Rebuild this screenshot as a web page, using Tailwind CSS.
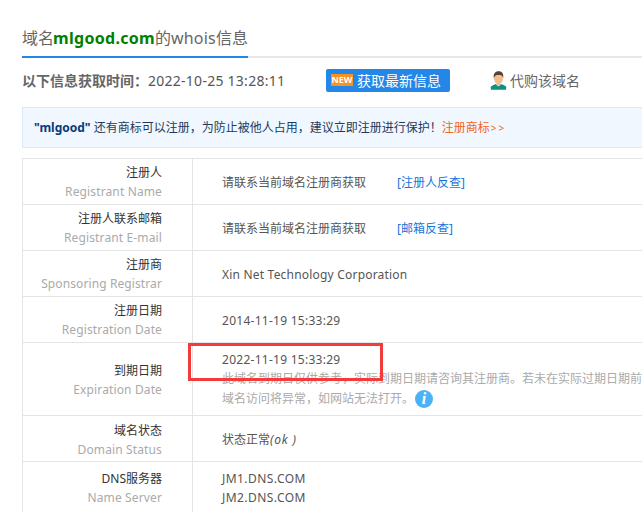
<!DOCTYPE html>
<html lang="zh-CN">
<head>
    <meta charset="UTF-8">
    <title>mlgood.com whois</title>
    <script src="https://cdn.jsdelivr.net/npm/@tailwindcss/browser@4"></script>
</head>
<body class="bg-white overflow-hidden h-[512px] w-[642px] relative font-['Noto_Sans','Noto_Sans_CJK_SC',sans-serif] text-[#555]">
    <div class="pl-[22px] pt-[22px]">
        <!-- title -->
        <div class="border-b-2 border-[#e8e8e8] h-[36px]">
            <div class="inline-block h-[36px] border-b-2 border-[#2487e8] text-[16px] leading-[32px] text-[#666] whitespace-nowrap">域名<b class="text-[#008000] font-bold tracking-[0.3px] -ml-[1px]">mlgood.com</b>的<span class="tracking-[0.2px]">whois</span>信息</div>
        </div>

        <!-- fetch time -->
        <div class="flex items-center h-[24px] mt-[10px] text-[14px] whitespace-nowrap">
            <b class="font-bold text-[#666]">以下信息获取时间：</b>
            <span class="w-[178px] text-[#555] tracking-[0.26px]">2022-10-25 13:28:11</span>
            <span class="flex items-center w-[124px] h-[23px] rounded-[2px] bg-[#2487e8] text-white pl-[5px]">
                <span class="w-[22px] h-[12px] bg-[#f7931e] text-[9px] leading-[12px] font-bold text-center mr-[4px]">NEW</span>
                获取最新信息
            </span>
            <svg class="ml-[40px] mr-[3px]" width="17" height="19" viewBox="0 0 20 22">
                <path d="M1 22v-3c0-2 3-3 6-4h6c3 1 6 2 6 4v3z" fill="#0f9080"/>
                <path d="M7 15l3 3 3-3z" fill="#fff"/>
                <ellipse cx="10" cy="8" rx="5.500" ry="7" fill="#f4be8c"/>
                <rect x="8" y="12" width="4" height="5" fill="#f4be8c"/>
                <path d="M4.500 8C3.500 2 7 0 10.500 0S16.500 3 15.500 8C15 5 13 4.500 10 4.500S6 5 4.500 8z" fill="#5a4238"/>
            </svg>
            <span class="text-[#666]">代购该域名</span>
        </div>

        <!-- trademark notice -->
        <div class="flex items-center h-[41px] mt-[15px] bg-[#f0f7ff] border border-r-0 border-[#dce9f8] pl-[11px] text-[12px] text-[#1f3a5c] whitespace-nowrap overflow-hidden">
            <b class="font-bold text-[#0b3a78]">"mlgood"</b>&nbsp;还有商标可以注册，为防止被他人占用，建议立即注册进行保护！<span class="text-[#f26522]">注册商标<span class="text-[10px] tracking-[2px] ml-[1px]">&gt;&gt;</span></span>
        </div>

        <!-- whois table -->
        <div class="mt-[10px] border-t border-l border-[#e4e4e4] text-[12px]">
            <div class="flex h-[46px] border-b border-[#e4e4e4]">
                <div class="w-[170px] shrink-0 border-r border-[#e4e4e4] pr-[30px] pt-[4px] text-right leading-[19px]"><div class="text-[#333]">注册人</div><div class="text-[#aaa] tracking-[0.13px]">Registrant Name</div></div>
                <div class="flex items-center pl-[29px] pt-[2px] text-[#555]"><span class="w-[175px]">请联系当前域名注册商获取</span><span class="text-[#1a73d9]">[注册人反查]</span></div>
            </div>
            <div class="flex h-[46px] border-b border-[#e4e4e4]">
                <div class="w-[170px] shrink-0 border-r border-[#e4e4e4] pr-[30px] pt-[4px] text-right leading-[19px]"><div class="text-[#333]">注册人联系邮箱</div><div class="text-[#aaa] tracking-[0.13px]">Registrant E-mail</div></div>
                <div class="flex items-center pl-[29px] pt-[2px] text-[#555]"><span class="w-[175px]">请联系当前域名注册商获取</span><span class="text-[#1a73d9]">[邮箱反查]</span></div>
            </div>
            <div class="flex h-[46px] border-b border-[#e4e4e4]">
                <div class="w-[170px] shrink-0 border-r border-[#e4e4e4] pr-[30px] pt-[4px] text-right leading-[19px]"><div class="text-[#333]">注册商</div><div class="text-[#aaa] tracking-[0.1px]">Sponsoring Registrar</div></div>
                <div class="flex items-center pl-[29px] pt-[2px] text-[#555] tracking-[0.2px]">Xin Net Technology Corporation</div>
            </div>
            <div class="flex h-[46px] border-b border-[#e4e4e4]">
                <div class="w-[170px] shrink-0 border-r border-[#e4e4e4] pr-[30px] pt-[4px] text-right leading-[19px]"><div class="text-[#333]">注册日期</div><div class="text-[#aaa] tracking-[0.13px]">Registration Date</div></div>
                <div class="flex items-center pl-[29px] pt-[2px] text-[#555] tracking-[0.27px]">2014-11-19 15:33:29</div>
            </div>
            <div class="flex h-[73px] border-b border-[#e4e4e4]">
                <div class="w-[170px] shrink-0 border-r border-[#e4e4e4] pr-[30px] pt-[18px] text-right leading-[19px]"><div class="text-[#333]">到期日期</div><div class="text-[#aaa] tracking-[0.13px]">Expiration Date</div></div>
                <div class="pl-[29px] pt-[7px] leading-[19px] whitespace-nowrap overflow-hidden">
                    <div class="text-[#555] tracking-[0.27px]">2022-11-19 15:33:29</div>
                    <div class="text-[#aaa]">此域名到期日仅供参考，实际到期日期请咨询其注册商。若未在实际过期日期前</div>
                    <div class="flex items-center text-[#aaa]">域名访问将异常，如网站无法打开。
                        <span class="ml-[1px] mt-[2px] w-[18px] h-[18px] rounded-full bg-[#4db1f5] text-white text-[16px] leading-[18px] text-center font-bold italic font-['Liberation_Serif',serif]">i</span>
                    </div>
                </div>
            </div>
            <div class="flex h-[46px] border-b border-[#e4e4e4]">
                <div class="w-[170px] shrink-0 border-r border-[#e4e4e4] pr-[30px] pt-[5px] text-right leading-[19px]"><div class="text-[#333]">域名状态</div><div class="text-[#aaa] tracking-[0.13px]">Domain Status</div></div>
                <div class="flex items-center pl-[29px] pt-[2px] text-[#555]">状态正常<i class="italic tracking-[0.8px]">(ok )</i></div>
            </div>
            <div class="flex h-[51px]">
                <div class="w-[170px] shrink-0 border-r border-[#e4e4e4] pr-[30px] pt-[7px] text-right leading-[19px]"><div class="text-[#333]">DNS服务器</div><div class="text-[#aaa] tracking-[0.13px]">Name Server</div></div>
                <div class="pl-[29px] pt-[7px] leading-[19px] text-[#555] tracking-[0.45px]"><div>JM1.DNS.COM</div><div>JM2.DNS.COM</div></div>
            </div>
        </div>
    </div>

    <!-- red annotation box drawn on top of the screenshot -->
    <div class="absolute left-[188px] top-[343px] w-[195px] h-[38px] border-[3px] border-[#f53a3a]"></div>
</body>
</html>
